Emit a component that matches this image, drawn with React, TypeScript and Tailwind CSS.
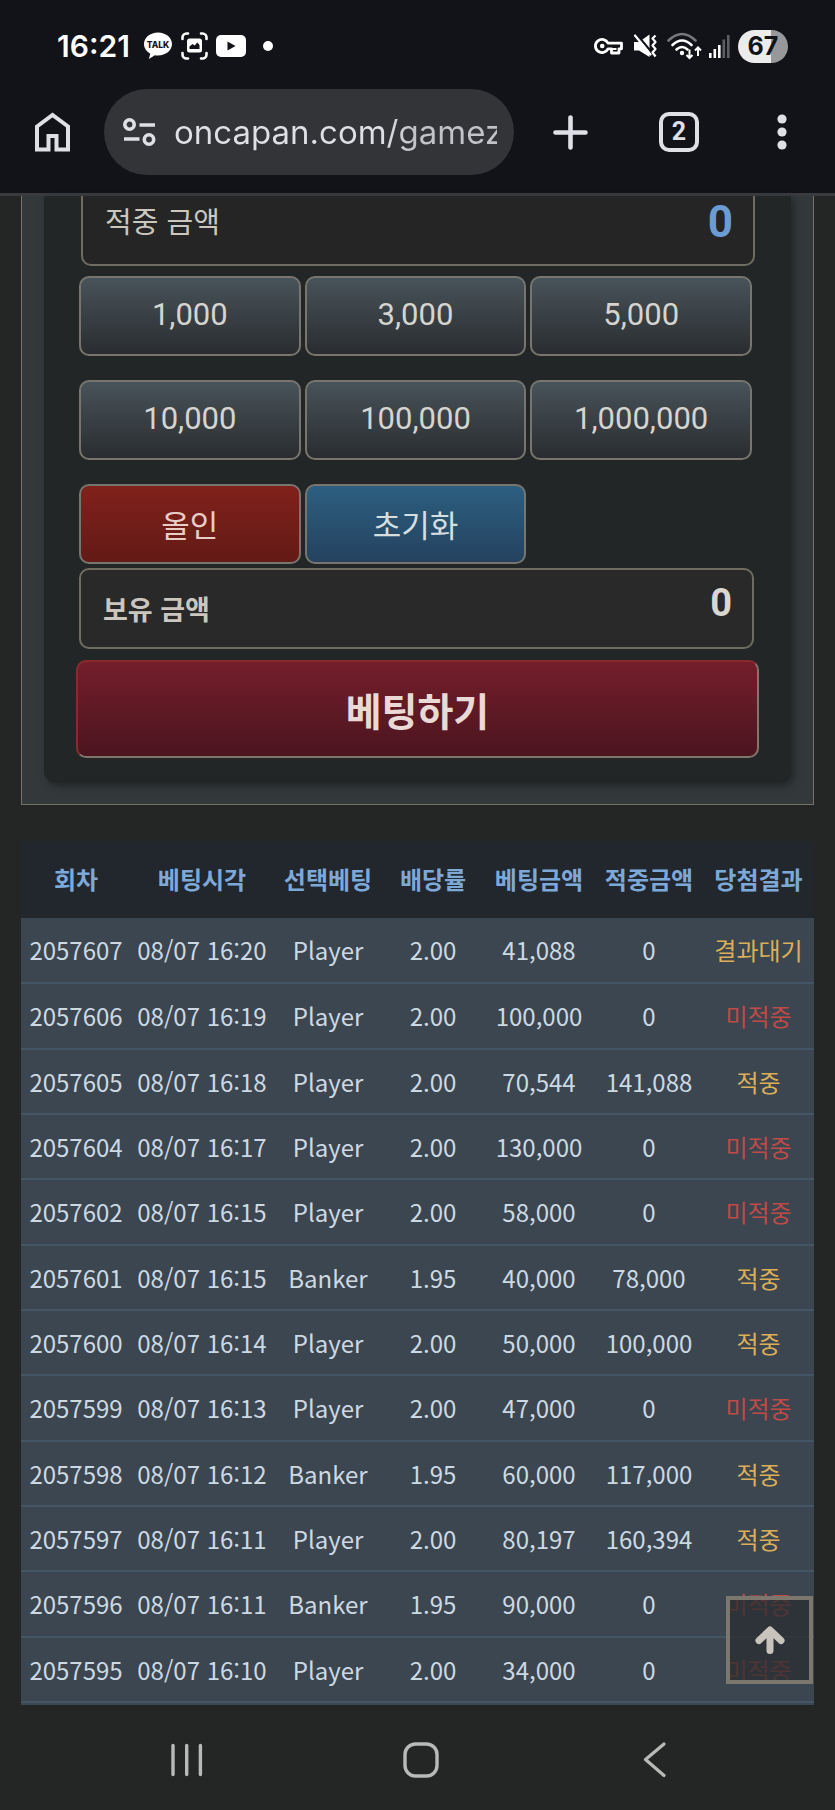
import type { ReactNode } from "react";

type Result = "wait" | "hit" | "miss";

const RESULT_TEXT: Record<Result, string> = { wait: "결과대기", hit: "적중", miss: "미적중" };
const RESULT_COLOR: Record<Result, string> = {
  wait: "text-[#dcae57]",
  hit: "text-[#dcae57]",
  miss: "text-[#c04a46]",
};

const BETS: [string, string, string, string, string, string, Result][] = [
  ["2057607", "08/07 16:20", "Player", "2.00", "41,088", "0", "wait"],
  ["2057606", "08/07 16:19", "Player", "2.00", "100,000", "0", "miss"],
  ["2057605", "08/07 16:18", "Player", "2.00", "70,544", "141,088", "hit"],
  ["2057604", "08/07 16:17", "Player", "2.00", "130,000", "0", "miss"],
  ["2057602", "08/07 16:15", "Player", "2.00", "58,000", "0", "miss"],
  ["2057601", "08/07 16:15", "Banker", "1.95", "40,000", "78,000", "hit"],
  ["2057600", "08/07 16:14", "Player", "2.00", "50,000", "100,000", "hit"],
  ["2057599", "08/07 16:13", "Player", "2.00", "47,000", "0", "miss"],
  ["2057598", "08/07 16:12", "Banker", "1.95", "60,000", "117,000", "hit"],
  ["2057597", "08/07 16:11", "Player", "2.00", "80,197", "160,394", "hit"],
  ["2057596", "08/07 16:11", "Banker", "1.95", "90,000", "0", "miss"],
  ["2057595", "08/07 16:10", "Player", "2.00", "34,000", "0", "miss"],
];

const COLUMNS: [string, string][] = [
  ["회차", "w-[110px]"],
  ["베팅시각", "w-[142px]"],
  ["선택베팅", "w-[110px]"],
  ["배당률", "w-[100px]"],
  ["베팅금액", "w-[112px]"],
  ["적중금액", "w-[108px]"],
  ["당첨결과", "w-[111px]"],
];

function StatusBar() {
  return (
    <div className="flex h-[89px] items-center justify-between pt-[3px] pr-[47px] pl-[57px]">
      <div className="flex items-center text-white">
        <span className="w-[87px] font-['Inter',sans-serif] text-[30px] leading-[36px] font-semibold">16:21</span>
        <svg width="28" height="28" viewBox="0 0 28 28" aria-hidden="true">
          <path
            fill="#fff"
            d="M14 0.5C6.3 0.5 0 5.6 0 12c0 4.1 2.500 7.600 6.300 9.700L4.800 27l6.100-3.800c1 .2 2 .3 3.100.3 7.700 0 14-5.100 14-11.500S21.700.5 14 .5z"
          />
          <text x="14" y="15.500" textAnchor="middle" fontFamily="Inter, sans-serif" fontWeight="800" fontSize="8.500" fill="#121318">
            TALK
          </text>
        </svg>
        <svg className="ml-[9px]" width="27" height="28" viewBox="0 0 27 28" fill="none" aria-hidden="true">
          <g stroke="#fff" strokeWidth="2.600" strokeLinecap="round">
            <path d="M1.500 7V5.500a4 4 0 0 1 4-4H7M20 1.500h1.500a4 4 0 0 1 4 4V7M25.500 21v1.500a4 4 0 0 1-4 4H20M7 26.500H5.500a4 4 0 0 1-4-4V21" />
          </g>
          <rect x="6" y="6.500" width="15" height="14" rx="2.500" fill="#fff" />
          <path d="M8.500 17v-2.500l3-2.500 2.200 1.500 2.600-3 2.200 2.500v4z" fill="#121318" />
        </svg>
        <svg className="ml-[8px]" width="30" height="22" viewBox="0 0 30 22" aria-hidden="true">
          <rect width="30" height="22" rx="5" fill="#fff" />
          <path d="M11.500 6.500v9l8-4.500z" fill="#121318" />
        </svg>
        <span className="ml-[17px] size-[10px] rounded-full bg-white" />
      </div>
      <div className="flex items-center">
        <svg width="29" height="18" viewBox="0 0 29 18" fill="none" aria-hidden="true">
          <path
            d="M14 6.200A6.600 6.600 0 1 0 14 11.800H17.500V16H25V11.800H27.500V6.200Z"
            stroke="#fff"
            strokeWidth="2.800"
            strokeLinejoin="round"
          />
          <circle cx="8.200" cy="9" r="2.300" fill="#fff" />
          <path d="M17.500 12h5" stroke="#fff" strokeWidth="2" />
        </svg>
        <svg className="ml-[10px]" width="25" height="24" viewBox="0 0 25 24" fill="none" aria-hidden="true">
          <path d="M1 8h5l10.500-7.500V23L6 16.500H1z" fill="#fff" />
          <path d="M3.500 0 20 20" stroke="#121318" strokeWidth="2.200" />
          <path d="M2 1.500 17.500 20.500" stroke="#fff" strokeWidth="2.200" strokeLinecap="round" />
          <path d="m22.500 1.500-3 3 3 3.500-3 3.500 3 3.500-3 3.500 3 4" stroke="#fff" strokeWidth="2.200" strokeLinejoin="round" />
        </svg>
        <svg className="ml-[9px]" width="35" height="28" viewBox="0 0 35 28" fill="none" aria-hidden="true">
          <path d="M1.500 8.500Q15 -4.500 28.500 8.500" stroke="#77787c" strokeWidth="2.600" strokeLinecap="round" />
          <path d="M5.500 13Q15 4 24.500 13M9.500 17.500Q15 12.500 20.500 17.500" stroke="#fff" strokeWidth="2.600" strokeLinecap="round" />
          <circle cx="15" cy="21" r="2.200" fill="#fff" />
          <path d="M22.500 17.500v8M19.500 23l3 3 3-3M31 24v-8M28 18.500l3-3 3 3" stroke="#fff" strokeWidth="2" />
        </svg>
        <svg className="ml-[7px]" width="21" height="23" viewBox="0 0 21 23" aria-hidden="true">
          <path d="M0 18h2.600v5H0zM4.500 14h2.600v9H4.500zM9 10h2.600v13H9z" fill="#fff" />
          <path d="M13.500 4.500h2.600V23h-2.600zM18 0h2.600v23H18z" fill="#5d5e62" />
        </svg>
        <span className="ml-[8px] flex h-[33px] w-[50px] items-center justify-center rounded-full bg-linear-to-r from-[#ececec] from-66% to-[#98989b] to-66% font-['Inter',sans-serif] text-[25px] leading-[33px] font-bold text-[#121318]">
          67
        </span>
      </div>
    </div>
  );
}

function Toolbar() {
  return (
    <div className="flex h-[104px] items-start pr-[48px] pl-[35px]">
      <button type="button" aria-label="홈" className="flex h-[86px] items-center">
        <svg width="35" height="40" viewBox="0 0 35 40" fill="none" stroke="#dfdfe6" strokeWidth="4">
          <path d="M2 14.500 17.500 3 33 14.500V37.500H21.500V24H13.500V37.500H2Z" />
        </svg>
      </button>
      <div className="ml-[34px] flex h-[86px] min-w-0 flex-1 items-center rounded-full bg-[#333438] pr-[17px] pl-[19px]">
        <svg className="shrink-0" width="33" height="28" viewBox="0 0 33 28" fill="none" stroke="#dfdfe6" strokeWidth="3.600" aria-hidden="true">
          <circle cx="6.500" cy="6.500" r="4.700" />
          <circle cx="26" cy="21.500" r="4.700" />
          <path d="M16.500 7H32M1 21h15.500" />
        </svg>
        <input
          type="text"
          aria-label="주소"
          readOnly
          value="oncapan.com/gamez"
          className="ml-[18px] w-full min-w-0 bg-linear-to-r from-[#dfdfe6] from-64% to-[#c2c2c9] to-74% bg-clip-text font-['Inter',sans-serif] text-[33px] leading-[44px] text-transparent outline-none"
        />
      </div>
      <button type="button" aria-label="새 탭" className="ml-[39px] flex h-[86px] items-center">
        <svg width="35" height="35" viewBox="0 0 35 35" stroke="#dfdfe6" strokeWidth="4.600" strokeLinecap="round">
          <path d="M17.500 2.500v30M2.500 17.500h30" />
        </svg>
      </button>
      <button type="button" aria-label="탭 2개" className="ml-[71px] flex h-[86px] items-center">
        <span className="flex size-[40px] items-center justify-center rounded-[10px] border-4 border-[#dfdfe6] font-['Roboto',sans-serif] text-[25px] leading-[30px] font-bold text-[#dfdfe6]">
          2
        </span>
      </button>
      <button type="button" aria-label="메뉴" className="ml-[78px] flex h-[86px] items-center">
        <svg width="10" height="36" viewBox="0 0 10 36" fill="#dfdfe6">
          <circle cx="5" cy="5" r="4.600" />
          <circle cx="5" cy="18" r="4.600" />
          <circle cx="5" cy="31" r="4.600" />
        </svg>
      </button>
    </div>
  );
}

function ChipButton({ tone, children }: { tone: string; children: ReactNode }) {
  return (
    <button
      type="button"
      className={`h-[80px] rounded-[10px] border-2 border-[#77756e] bg-linear-to-b text-[31px] leading-[40px] ${tone}`}
    >
      {children}
    </button>
  );
}

const SLATE = "from-[#48535a] to-[#2a2d30] pb-[3px] font-['Roboto',sans-serif] text-[#d6d4cf]";

function BetPanel() {
  return (
    <section className="mx-[21px] border-x border-b border-[#77736a] bg-[#33383b] pr-[22px] pb-[21px] pl-[22px]">
      <div className="rounded-b-[12px] bg-[#222627] px-[32px] pb-[25px] shadow-[3px_3px_7px_#222627]">
        <div className="mr-[4px] ml-[5px] flex h-[70px] items-start justify-between rounded-b-[10px] border-2 border-t-0 border-[#6f6c62] bg-[#242524] pr-[20px] pl-[22px]">
          <span className="pt-[2px] text-[29px] leading-[44px] text-[#cbc7bf]">적중 금액</span>
          <span className="pt-[4px] font-['Roboto',sans-serif] text-[44px] leading-[44px] font-bold text-[#6b9cd4]">0</span>
        </div>
        <div className="mt-[10px] mr-[7px] ml-[3px] grid grid-cols-3 gap-x-[4px] gap-y-[24px]">
          <ChipButton tone={SLATE}>1,000</ChipButton>
          <ChipButton tone={SLATE}>3,000</ChipButton>
          <ChipButton tone={SLATE}>5,000</ChipButton>
          <ChipButton tone={SLATE}>10,000</ChipButton>
          <ChipButton tone={SLATE}>100,000</ChipButton>
          <ChipButton tone={SLATE}>1,000,000</ChipButton>
          <ChipButton tone="from-[#80211b] to-[#631a16] text-[#e8cdc6]">올인</ChipButton>
          <ChipButton tone="from-[#2d5f80] to-[#24425f] text-[#d5dfe0]">초기화</ChipButton>
        </div>
        <div className="mt-[4px] mr-[5px] ml-[3px] flex h-[81px] items-start justify-between rounded-[10px] border-2 border-[#6f6c62] bg-[#282928] pr-[20px] pl-[22px] font-bold">
          <span className="pt-[17px] text-[27px] leading-[44px] text-[#cbc7bf]">보유 금액</span>
          <span className="pt-[11px] font-['Roboto',sans-serif] text-[38px] leading-[44px] text-[#dad7d1]">0</span>
        </div>
        <button
          type="button"
          className="mt-[11px] h-[98px] w-full rounded-[10px] border-2 border-t-[#8b2a2d] border-r-[#82756d] border-b-[#82756d] border-l-[#8b2a2d] bg-linear-to-b from-[#741e2b] to-[#4b151f] text-[39px] leading-[50px] font-bold text-[#e9dad7]"
        >
          베팅하기
        </button>
      </div>
    </section>
  );
}

function BetTable() {
  return (
    <div className="mx-[21px] mt-[36px] bg-[#3b4650] pb-[2px]">
      <table className="w-full table-fixed border-collapse text-center text-[24px] leading-[32px] whitespace-nowrap text-[#cdd9e2]">
        <thead>
          <tr className="h-[77px] bg-[#22262d] text-[#7da9d8]">
            {COLUMNS.map(([name, width]) => (
              <th key={name} scope="col" className={`p-0 pb-[2px] font-bold ${width}`}>
                {name}
              </th>
            ))}
          </tr>
        </thead>
        <tbody>
          {BETS.map(([id, time, pick, odds, stake, won, result]) => (
            <tr key={id} className="h-[65px] border-b-2 border-[#445663] nth-[3n+2]:h-[66px]">
              <td className="p-0">{id}</td>
              <td className="p-0">{time}</td>
              <td className="p-0">{pick}</td>
              <td className="p-0">{odds}</td>
              <td className="p-0">{stake}</td>
              <td className="p-0">{won}</td>
              <td className={`p-0 ${RESULT_COLOR[result]}`}>{RESULT_TEXT[result]}</td>
            </tr>
          ))}
        </tbody>
      </table>
    </div>
  );
}

function NavigationBar() {
  return (
    <nav className="flex h-[105px] items-center justify-between pt-[4px] pr-[162px] pl-[169px]">
      <button type="button" aria-label="최근 앱" className="flex w-[36px] justify-center">
        <svg width="32" height="36" viewBox="0 0 32 36" stroke="#b9b9b8" strokeWidth="3.400" strokeLinecap="round">
          <path d="M2 3.500v29M15.700 3.500v29M29.400 3.500v29" />
        </svg>
      </button>
      <button type="button" aria-label="홈 화면" className="flex w-[36px] justify-center">
        <svg width="36" height="36" viewBox="0 0 36 36" fill="none" stroke="#b9b9b8" strokeWidth="3.400">
          <rect x="2" y="2" width="32" height="32" rx="10.500" />
        </svg>
      </button>
      <button type="button" aria-label="뒤로" className="flex w-[36px] justify-center">
        <svg width="24" height="36" viewBox="0 0 24 36" fill="none" stroke="#b9b9b8" strokeWidth="3.200" strokeLinecap="round" strokeLinejoin="round">
          <path d="M21 2 2.500 17.500 21 33.500" />
        </svg>
      </button>
    </nav>
  );
}

export default function App() {
  return (
    <div lang="ko" className="relative min-h-screen bg-[#242625] font-['Noto_Sans_CJK_KR',sans-serif]">
      <header className="border-b-[3px] border-[#3a3b3f] bg-[#121318]">
        <StatusBar />
        <Toolbar />
      </header>
      <main className="relative">
        <BetPanel />
        <BetTable />
        <button
          type="button"
          aria-label="맨 위로"
          className="absolute right-[22px] bottom-[21px] flex h-[88px] w-[87px] items-center justify-center border-4 border-[#7b776c] bg-[#2a2e30]/75"
        >
          <svg width="30" height="28" viewBox="0 0 30 28" fill="none" stroke="#c8c3bb" strokeWidth="7" strokeLinecap="round" strokeLinejoin="round">
            <path d="M15 24.500V5M4 14.500 15 4 26 14.500" />
          </svg>
        </button>
      </main>
      <NavigationBar />
    </div>
  );
}
